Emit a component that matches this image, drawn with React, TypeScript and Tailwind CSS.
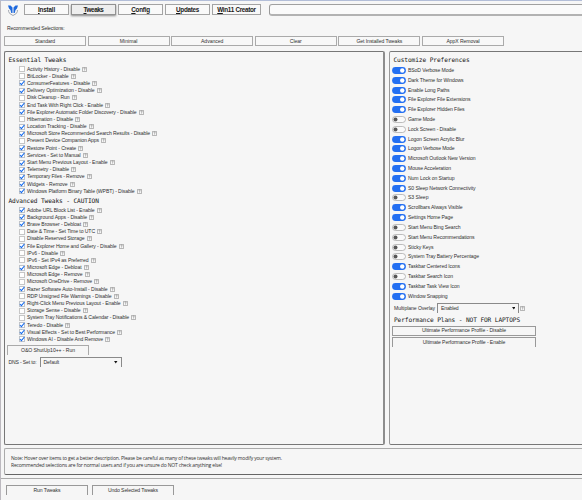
import React from "react";

type Item = [string, number, number];

// label, enabled, label width in px
const essential: Item[] = [
  ["Activity History - Disable", 0, 53],
  ["BitLocker - Disable", 0, 41.5],
  ["ConsumerFeatures - Disable", 1, 63],
  ["Delivery Optimization - Disable", 1, 67.5],
  ["Disk Cleanup - Run", 0, 42.5],
  ["End Task With Right Click - Enable", 1, 76],
  ["File Explorer Automatic Folder Discovery - Disable", 1, 109.5],
  ["Hibernation - Disable", 0, 46],
  ["Location Tracking - Disable", 1, 59.5],
  ["Microsoft Store Recommended Search Results - Disable", 1, 123],
  ["Prevent Device Companion Apps", 0, 72],
  ["Restore Point - Create", 1, 49],
  ["Services - Set to Manual", 1, 53.5],
  ["Start Menu Previous Layout - Enable", 1, 80.5],
  ["Telemetry - Disable", 1, 42],
  ["Temporary Files - Remove", 1, 57.5],
  ["Widgets - Remove", 1, 40.5],
  ["Windows Platform Binary Table (WPBT) - Disable", 1, 107.5],
];

const advanced: Item[] = [
  ["Adobe URL Block List - Enable", 1, 67.5],
  ["Background Apps - Disable", 1, 60],
  ["Brave Browser - Debloat", 1, 54],
  ["Date & Time - Set Time to UTC", 0, 68],
  ["Disable Reserved Storage", 0, 57.5],
  ["File Explorer Home and Gallery - Disable", 1, 89.5],
  ["IPv6 - Disable", 0, 31],
  ["IPv6 - Set IPv4 as Preferred", 0, 61.5],
  ["Microsoft Edge - Debloat", 1, 54.5],
  ["Microsoft Edge - Remove", 0, 55.5],
  ["Microsoft OneDrive - Remove", 0, 65],
  ["Razer Software Auto-Install - Disable", 1, 80.5],
  ["RDP Unsigned File Warnings - Disable", 0, 84.5],
  ["Right-Click Menu Previous Layout - Enable", 1, 93.5],
  ["Storage Sense - Disable", 0, 53.5],
  ["System Tray Notifications & Calendar - Disable", 0, 102],
  ["Teredo - Disable", 1, 36],
  ["Visual Effects - Set to Best Performance", 1, 88],
  ["Windows AI - Disable And Remove", 1, 76],
];

const preferences: Item[] = [
  ["BSoD Verbose Mode", 1, 46],
  ["Dark Theme for Windows", 1, 55.5],
  ["Enable Long Paths", 1, 41.5],
  ["File Explorer File Extensions", 1, 62.5],
  ["File Explorer Hidden Files", 1, 56.5],
  ["Game Mode", 0, 27],
  ["Lock Screen - Disable", 0, 48],
  ["Logon Screen Acrylic Blur", 1, 56.5],
  ["Logon Verbose Mode", 1, 46.5],
  ["Microsoft Outlook New Version", 1, 67.5],
  ["Mouse Acceleration", 1, 43],
  ["Num Lock on Startup", 1, 46.5],
  ["S0 Sleep Network Connectivity", 1, 67.5],
  ["S3 Sleep", 0, 20.5],
  ["Scrollbars Always Visible", 1, 54.5],
  ["Settings Home Page", 1, 45],
  ["Start Menu Bing Search", 0, 52.5],
  ["Start Menu Recommendations", 0, 66.5],
  ["Sticky Keys", 0, 25.5],
  ["System Tray Battery Percentage", 0, 71],
  ["Taskbar Centered Icons", 1, 52],
  ["Taskbar Search Icon", 0, 45],
  ["Taskbar Task View Icon", 1, 51.5],
  ["Window Snapping", 1, 39.5],
];

// Spreads the letters so that the label fills its column width exactly.
function Fit({ text, width, className = "" }: { text: React.ReactNode; width: number; className?: string }) {
  const ref = React.useRef<HTMLSpanElement>(null);
  React.useLayoutEffect(() => {
    const el = ref.current;
    if (!el) return;
    el.style.letterSpacing = "0px";
    const natural = el.getBoundingClientRect().width;
    const count = (el.textContent || "").length;
    el.style.letterSpacing = (width - natural) / count + "px";
  }, [text, width]);
  return (
    <span ref={ref} className={"inline-block shrink-0 whitespace-nowrap " + className}>
      {text}
    </span>
  );
}

function Help() {
  return (
    <svg className="ml-[2px] h-[5px] w-[5px] shrink-0" viewBox="0 0 11 11" fill="none" stroke="#666">
      <path d="M1 1h9v9H1z" strokeWidth="1" />
      <path d="M4 4.2Q4 2.5 5.6 2.5T7.2 4.2Q7.2 5.1 5.6 5.8V6.8M5.6 8v1" strokeWidth="1" />
    </svg>
  );
}

function Check({ item }: { item: Item }) {
  return (
    <div className="flex h-[7.2px] items-center">
      <svg className="mr-[2px] h-[6px] w-[6px] shrink-0" viewBox="0 0 12 12" fill="none">
        <path d="M.8.8h10.4v10.4H.8z" fill="#fff" stroke={item[1] ? "#8a93a0" : "#999"} strokeWidth="1.2" />
        {item[1] ? <path d="M1.8 6l3 3.3L10.8 2" stroke="#1269ee" strokeWidth="2.1" /> : null}
      </svg>
      <Fit text={item[0]} width={item[2]} />
      <Help />
    </div>
  );
}

function Toggle({ item }: { item: Item }) {
  return (
    <div className="flex h-[9.826px] items-center">
      <svg className="mr-[2px] h-[7px] w-[14px] shrink-0" viewBox="0 0 28 14">
        {item[1] ? (
          <>
            <rect x=".2" y=".2" width="27.6" height="13.6" rx="6.8" fill="#236ff2" />
            <circle cx="20.5" cy="7" r="4.4" fill="#fff" />
          </>
        ) : (
          <>
            <rect x="1" y="1" width="26" height="12" rx="6" fill="#fafafa" stroke="#9a9a9a" strokeWidth="1.3" />
            <circle cx="7" cy="7" r="4" fill="#575757" />
          </>
        )}
      </svg>
      <Fit text={item[0]} width={item[2]} />
    </div>
  );
}

const tabs: [string, string, number][] = [
  ["I", "nstall", 17],
  ["T", "weaks", 20],
  ["C", "onfig", 18.5],
  ["U", "pdates", 23],
  ["W", "in11 Creator", 38.5],
];

const presets: [string, number][] = [
  ["Standard", 20],
  ["Minimal", 17.5],
  ["Advanced", 22.5],
  ["Clear", 12],
  ["Get Installed Tweaks", 46],
  ["AppX Removal", 33],
];

const headingClass =
  "block whitespace-pre font-['DejaVu_Sans_Mono',monospace] text-[6.2px] leading-[8px] text-[#151515]";

function Select({ value, width, className }: { value: string; width: number; className: string }) {
  return (
    <div className={"flex items-center justify-between border-t border-l border-r border-[#8a8a8a] px-[3px] " + className}>
      <Fit text={value} width={width} />
      <svg className="h-[2.5px] w-[3.5px]" viewBox="0 0 4 3">
        <path d="M0 0h4L2 3z" fill="#111" />
      </svg>
    </div>
  );
}

export default function App() {
  return (
    <div className="flex h-[500px] w-[582px] flex-col overflow-hidden border-t border-l border-t-[#b3bed8] border-l-[#bcb9bf] bg-[#f6f6f6] font-['Liberation_Sans',Arial,sans-serif] text-[5.1px] leading-[7px] text-[#303030]">
      <header className="flex h-[23px] shrink-0 items-start pt-[3px] pl-[7px]">
        <svg className="mr-[6px] h-[12px] w-[10px]" viewBox="0 0 20 24">
          <path d="M1.2 12v3q0 4 8.8 8q8.8-4 8.8-8v-3" fill="none" stroke="#929aa5" strokeWidth="1.7" />
          <path d="M0 3h5l4 4v11H6.500L5 12L2 9zM20 3h-5l-4 4v11h2.500L15 12l3-3z" fill="#1e69dd" />
        </svg>
        <nav className="flex gap-[2px]">
          {tabs.map(([key, rest, w], i) => (
            <button
              key={rest}
              className={
                "flex h-[11px] items-center justify-center border font-bold text-[6.3px] text-[#181818] " +
                (i === 4 ? "w-[49px] " : "w-[45px] ") +
                (i === 1 ? "border-[#929292] bg-[#eeeeee] shadow-[0_1px_2px_#888]" : "border-[#a3a3a3] bg-[#f9f9f9]")
              }
            >
              <Fit text={<><span className="underline">{key}</span>{rest}</>} width={w} />
            </button>
          ))}
        </nav>
        <div className="ml-[8px] h-[12px] flex-1 rounded-l-[3px] border-t border-b-2 border-l border-t-[#a0a0a0] border-b-[#b2b2b2] border-l-[#999] bg-[#fafafa]" />
      </header>
      <div className="flex h-[12px] shrink-0 pt-[1px] pl-[6px]">
        <Fit text="Recommended Selections:" width={57.5} />
      </div>
      <div className="flex h-[15px] shrink-0 gap-[1.6px] pl-[3px]">
        {presets.map(([label, w]) => (
          <button key={label} className="flex h-[10px] w-[82px] items-center justify-center border border-[#aaa] bg-[#f8f8f8]">
            <Fit text={label} width={w} />
          </button>
        ))}
      </div>

      <main className="flex h-[394px] shrink-0 gap-[4px] pl-[3px]">
        <section className="w-[381px] rounded-[2px] border border-r-2 border-[#777] border-r-[#8d8d8d] pl-[3.5px] pt-[3.5px]">
          <Fit text="Essential Tweaks" width={57.8} className={headingClass} />
          <div className="pt-[2px] pl-[10.5px]">
            {essential.map((item) => <Check key={item[0]} item={item} />)}
          </div>
          <div className="flex pt-[2px]">
            <Fit text="Advanced Tweaks - CAUTION" width={90.3} className={headingClass} />
          </div>
          <div className="pt-[1.6px] pl-[10.5px]">
            {advanced.map((item) => <Check key={item[0]} item={item} />)}
          </div>
          <button className="mt-[1.5px] -ml-[1.5px] flex h-[10px] w-[82px] items-center justify-center border border-b-0 border-[#aaa]">
            <Fit text="O&O ShutUp10++ - Run" width={54} />
          </button>
          <div className="mt-[2.5px] flex items-center">
            <Fit text="DNS - Set to:" width={28} />
            <Select value="Default" width={15.5} className="ml-[3px] h-[10px] w-[82px]" />
          </div>
        </section>

        <section className="flex-1 rounded-l-[2px] border border-r-0 border-[#777] border-l-[#999] pt-[3.5px] pl-[2px]">
          <Fit text="Customize Preferences" width={76} className={"ml-[1.5px] " + headingClass} />
          <div className="pt-[2px]">
            {preferences.map((item) => <Toggle key={item[0]} item={item} />)}
          </div>
          <div className="mt-[2px] ml-[2px] flex items-center">
            <Fit text="Multiplane Overlay" width={41} />
            <Select value="Enabled" width={17.5} className="ml-[2px] h-[10px] w-[82px]" />
            <span className="-ml-[1.5px] flex"><Help /></span>
          </div>
          <div className="mt-[2.5px] ml-[2px] flex">
            <Fit text="Performance Plans - NOT FOR LAPTOPS" width={126} className={headingClass} />
          </div>
          <button className="mt-[2px] flex h-[10px] w-[144px] items-center justify-center border border-[#999]">
            <Fit text="Ultimate Performance Profile - Disable" width={84} />
          </button>
          <button className="mt-[1px] flex h-[10px] w-[144px] items-center justify-center border border-b-0 border-[#999]">
            <Fit text="Ultimate Performance Profile - Enable" width={82.5} />
          </button>
        </section>
      </main>

      <div className="mt-[3px] ml-[3px] flex h-[27px] shrink-0 flex-col justify-center rounded-l-[2px] border border-r-0 border-[#aaa] border-b-[#666] pl-[6px] font-['Open_Sans',sans-serif] text-[5px] leading-[6.5px]">
        <Fit className="self-start" text="Note: Hover over items to get a better description. Please be careful as many of these tweaks will heavily modify your system." width={271} />
        <Fit className="self-start" text="Recommended selections are for normal users and if you are unsure do NOT check anything else!" width={211} />
      </div>
      <footer className="mt-[3px] flex flex-1 gap-[4px] border-t border-[#aaa] pt-[6px] pl-[5px]">
        <button className="flex h-[10px] w-[82px] items-center justify-center border border-b-0 border-[#999]">
          <Fit text="Run Tweaks" width={27} />
        </button>
        <button className="flex h-[10px] w-[82px] items-center justify-center border border-b-0 border-[#999]">
          <Fit text="Undo Selected Tweaks" width={50} />
        </button>
      </footer>
    </div>
  );
}
